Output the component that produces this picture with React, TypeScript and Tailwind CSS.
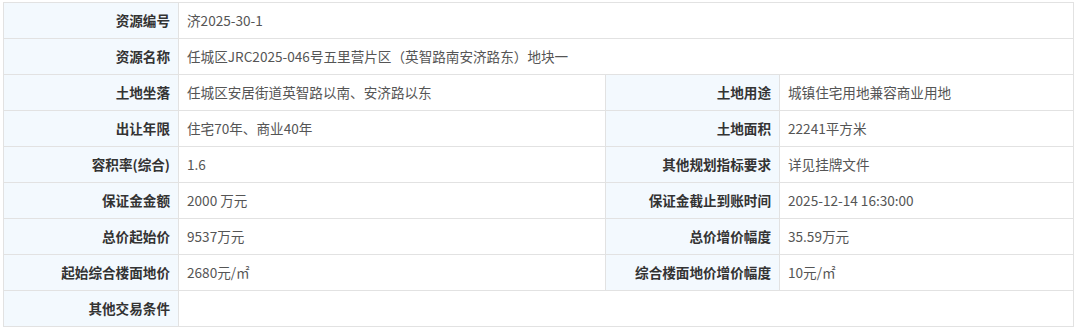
import React from "react";

type Row = { l1: string; v1: string; l2?: string; v2?: string };

const rows: Row[] = [
  { l1: "资源编号", v1: "济2025-30-1" },
  { l1: "资源名称", v1: "任城区JRC2025-046号五里营片区（英智路南安济路东）地块一" },
  { l1: "土地坐落", v1: "任城区安居街道英智路以南、安济路以东", l2: "土地用途", v2: "城镇住宅用地兼容商业用地" },
  { l1: "出让年限", v1: "住宅70年、商业40年", l2: "土地面积", v2: "22241平方米" },
  { l1: "容积率(综合)", v1: "1.6", l2: "其他规划指标要求", v2: "详见挂牌文件" },
  { l1: "保证金金额", v1: "2000 万元", l2: "保证金截止到账时间", v2: "2025-12-14 16:30:00" },
  { l1: "总价起始价", v1: "9537万元", l2: "总价增价幅度", v2: "35.59万元" },
  { l1: "起始综合楼面地价", v1: "2680元/㎡", l2: "综合楼面地价增价幅度", v2: "10元/㎡" },
  { l1: "其他交易条件", v1: "" },
];

const font = { fontFamily: '"Microsoft YaHei", "Noto Sans CJK SC", "Noto Sans", sans-serif' };

function Label({ children }: { children: React.ReactNode }) {
  return (
    <div className="h-[36px] flex items-center justify-end pr-[8px] bg-[#f3f9fe] border-r border-b border-[#e2e2e2] text-[13.6px] font-bold text-[#333333] whitespace-nowrap">
      {children}
    </div>
  );
}

function Value({ children, span }: { children: React.ReactNode; span?: boolean }) {
  return (
    <div
      className={
        "h-[36px] flex items-center pl-[8px] bg-white border-r border-b border-[#e2e2e2] text-[13.6px] text-[#555555] whitespace-nowrap " +
        (span ? "col-span-3" : "")
      }
    >
      {children}
    </div>
  );
}

export default function App() {
  return (
    <div className="w-[1080px] h-[333px] bg-white pt-[2px] pl-[3px]" style={font}>
      <div className="grid grid-cols-[175px_427px_174px_294px] w-[1071px] border-l border-t border-[#e2e2e2]">
        {rows.map((r, i) =>
          r.l2 ? (
            <React.Fragment key={i}>
              <Label>{r.l1}</Label>
              <Value>{r.v1}</Value>
              <Label>{r.l2}</Label>
              <Value>{r.v2}</Value>
            </React.Fragment>
          ) : (
            <React.Fragment key={i}>
              <Label>{r.l1}</Label>
              <Value span>{r.v1}</Value>
            </React.Fragment>
          )
        )}
      </div>
    </div>
  );
}
